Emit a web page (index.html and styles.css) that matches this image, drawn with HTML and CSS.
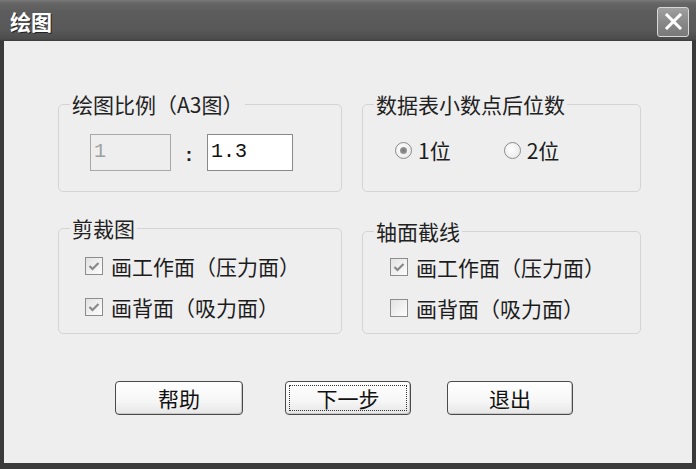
FILE: index.html
```html
<!DOCTYPE html>
<html lang="zh">
<head>
<meta charset="utf-8">
<title>绘图</title>
<link rel="stylesheet" href="styles.css">
</head>
<body>
<div class="window">
  <div class="titlebar">
    <span class="title">绘图</span>
    <div class="close">
      <svg width="19" height="17" viewBox="0 0 19 17"><path d="M3 2 L16 15 M16 2 L3 15" stroke="#fff" stroke-width="3" stroke-linecap="square"/></svg>
    </div>
  </div>
  <div class="client">
    <div class="groups">
      <fieldset class="group">
        <legend>绘图比例（A3图）</legend>
        <div class="ratio">
          <span class="field disabled">1</span>
          <span class="colon">:</span>
          <span class="field active">1.3</span>
        </div>
      </fieldset>
      <fieldset class="group">
        <legend>数据表小数点后位数</legend>
        <div class="radios">
          <label class="opt"><span class="radio on"></span><span>1位</span></label>
          <label class="opt opt2"><span class="radio"></span><span>2位</span></label>
        </div>
      </fieldset>
      <fieldset class="group">
        <legend>剪裁图</legend>
        <div class="checks">
          <label class="chk-row"><span class="chk on"><svg width="12" height="10" viewBox="0 0 12 10"><path d="M1.5 5 L4.5 8 L10.5 2" fill="none" stroke="#888" stroke-width="2.2"/></svg></span><span>画工作面（压力面）</span></label>
          <label class="chk-row"><span class="chk on"><svg width="12" height="10" viewBox="0 0 12 10"><path d="M1.5 5 L4.5 8 L10.5 2" fill="none" stroke="#888" stroke-width="2.2"/></svg></span><span>画背面（吸力面）</span></label>
        </div>
      </fieldset>
      <fieldset class="group shifted">
        <legend>轴面截线</legend>
        <div class="checks checks-r">
          <label class="chk-row"><span class="chk on"><svg width="12" height="10" viewBox="0 0 12 10"><path d="M1.5 5 L4.5 8 L10.5 2" fill="none" stroke="#888" stroke-width="2.2"/></svg></span><span>画工作面（压力面）</span></label>
          <label class="chk-row"><span class="chk"></span><span>画背面（吸力面）</span></label>
        </div>
      </fieldset>
    </div>
    <div class="buttons">
      <div class="btn b1">帮助</div>
      <div class="btn b2 focused"><span class="focus">下一步</span></div>
      <div class="btn b3">退出</div>
    </div>
  </div>
</div>
</body>
</html>
```
FILE: styles.css
```css
* { box-sizing: border-box; }
html, body { margin: 0; padding: 0; }
body {
  width: 696px;
  height: 469px;
  overflow: hidden;
  font-family: "Noto Sans CJK SC", "Liberation Sans", sans-serif;
  color: #1c1c1c;
}
.window {
  width: 696px;
  height: 469px;
  display: flex;
  flex-direction: column;
  background: #3a3a3a;
}
.titlebar {
  height: 41px;
  flex: none;
  display: flex;
  align-items: center;
  justify-content: space-between;
  padding: 0 6px 0 10px;
  background: linear-gradient(#7a7a7a 0px, #666 3px, #5c5c5c 12px, #585858 30px, #4c4c4c 39px, #3a3a3a 41px);
}
.title {
  color: #fff;
  font-size: 21px;
  font-weight: bold;
  line-height: 24px;
  text-shadow: 1px 1px 0 #222;
  margin-top: 1px;
}
.close {
  width: 32px;
  height: 30px;
  border: 1px solid #d8d8d8;
  border-radius: 3px;
  background: linear-gradient(#a0a0a0, #858585 60%, #7a7a7a);
  display: flex;
  align-items: center;
  justify-content: center;
  margin-top: 2px;
  margin-right: 1px;
}
.client {
  flex: 1;
  margin: 0 4px 6px 4px;
  background: #eeeeee;
  padding: 51px 0 0 54px;
}
.groups {
  display: grid;
  grid-template-columns: 284px 279px;
  grid-template-rows: 100px 118px;
  column-gap: 20px;
  row-gap: 24px;
}
.group {
  margin: 0;
  padding: 0;
  min-width: 0;
  border: 1px solid #d4d4d4;
  border-radius: 5px;
}
.group legend {
  margin-left: 11px;
  padding: 0 2px;
  font-size: 21px;
  line-height: 24px;
  color: #222;
}
.shifted { margin-top: 3px; }
.ratio {
  display: flex;
  align-items: center;
  padding: 18px 0 0 31px;
}
.field {
  height: 37px;
  display: flex;
  align-items: center;
  padding: 0 0 3px 3px;
  font-family: "Liberation Mono", monospace;
  font-size: 20px;
}
.field.disabled {
  width: 81px;
  border: 1px solid #a8a8a8;
  background: #eeeeee;
  color: #a0a0a0;
}
.field.active {
  width: 86px;
  border: 1px solid #8a8a8a;
  background: #fff;
  color: #111;
}
.colon {
  width: 36px;
  text-align: center;
  font-family: "Liberation Mono", monospace;
  font-weight: bold;
  font-size: 19px;
  padding-top: 6px;
}
.radios {
  display: flex;
  align-items: center;
  padding: 22px 0 0 32px;
  font-size: 21px;
  line-height: 24px;
}
.opt { display: flex; align-items: center; gap: 6px; }
.opt2 { margin-left: 53px; }
.radio {
  width: 17px;
  height: 17px;
  border-radius: 50%;
  border: 1px solid #8a8a8a;
  background: radial-gradient(circle at 40% 40%, #fff, #e4e4e4);
  position: relative;
  flex: none;
}
.radio.on::after {
  content: "";
  position: absolute;
  left: 4px;
  top: 4px;
  width: 7px;
  height: 7px;
  border-radius: 50%;
  background: radial-gradient(circle, #777, #a5a5a5);
}
.checks {
  padding: 5px 0 0 26px;
  font-size: 21px;
}
.checks-r { padding-top: 3px; padding-left: 27px; }
.chk-row {
  height: 41px;
  display: flex;
  align-items: center;
  gap: 8px;
}
.chk {
  width: 18px;
  height: 18px;
  border: 1px solid #8c8c8c;
  background: linear-gradient(135deg, #e2e2e2, #fdfdfd);
  display: flex;
  align-items: center;
  justify-content: center;
  flex: none;
}
.buttons {
  display: flex;
  margin-top: 47px;
  padding-left: 57px;
}
.btn {
  height: 34px;
  width: 126px;
  border: 1px solid #4a4a4a;
  border-radius: 4px;
  background: linear-gradient(#ffffff, #f6f6f6 60%, #e6e6e6);
  display: flex;
  align-items: center;
  justify-content: center;
  font-size: 21px;
  color: #111;
  box-shadow: inset -1px -1px 0 #c8c8c8;
}
.b1 { width: 128px; margin-right: 42px; }
.b2 { margin-right: 36px; padding: 3px; }
.focus {
  flex: 1;
  align-self: stretch;
  border: 1px dotted #333;
  display: flex;
  align-items: center;
  justify-content: center;
}
```
